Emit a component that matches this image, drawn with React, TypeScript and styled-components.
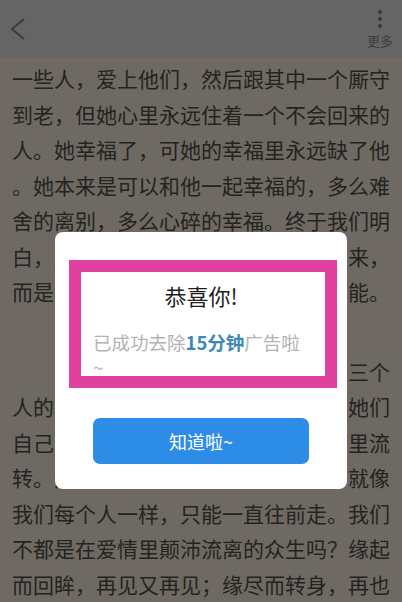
import styled, { createGlobalStyle } from "styled-components";

const GlobalStyle = createGlobalStyle`
  html, body {
    margin: 0;
    padding: 0;
    width: 402px;
    height: 602px;
    overflow: hidden;
    font-family: "Noto Sans CJK SC", "Noto Sans", sans-serif;
  }
`;

const Page = styled.div`
  position: relative;
  width: 402px;
  height: 602px;
  overflow: hidden;
  background: #ddd5c7;
`;

const Header = styled.div`
  height: 58px;
  background: #cbcbcb;
  display: flex;
  align-items: center;
  justify-content: space-between;
  padding: 0 9px 0 10px;
  box-sizing: border-box;
`;

const BackButton = styled.div`
  width: 20px;
  height: 58px;
  display: flex;
  align-items: center;
`;

const MoreButton = styled.div`
  display: flex;
  flex-direction: column;
  align-items: center;
  padding-top: 10px;
  height: 58px;
  box-sizing: border-box;
`;

const Dot = styled.span`
  width: 4px;
  height: 4px;
  border-radius: 50%;
  background: #757575;
  margin-bottom: 3px;
`;

const MoreLabel = styled.span`
  font-size: 13px;
  line-height: 16px;
  margin-top: 2px;
  color: #7a7a7a;
`;

const Article = styled.div`
  padding: 3px 12px 0;
  font-size: 21px;
  line-height: 35.5px;
  color: #4a4641;
`;

const Paragraph = styled.div`
  margin-bottom: 44px;
`;

const Line = styled.div`
  white-space: nowrap;
  height: 35.5px;
`;

const Overlay = styled.div`
  position: absolute;
  inset: 0;
  background: rgba(0, 0, 0, 0.5);
  display: flex;
  justify-content: center;
  align-items: flex-start;
  padding-top: 232px;
  box-sizing: border-box;
`;

const Dialog = styled.div`
  position: relative;
  width: 292px;
  background: #fff;
  border-radius: 8px;
  padding: 48px 38px 25px;
  box-sizing: border-box;
`;

const Title = styled.div`
  font-size: 22px;
  line-height: 30px;
  text-align: center;
  color: #1f1f1f;
`;

const Message = styled.div`
  margin-top: 20px;
  width: 212px;
  font-size: 18.5px;
  line-height: 25px;
  color: #b2b2b2;
`;

const Highlight = styled.span`
  color: #3d88b9;
  font-weight: 600;
`;

const ConfirmButton = styled.button`
  display: block;
  width: 100%;
  height: 46px;
  margin-top: 38px;
  border: none;
  border-radius: 7px;
  background: #2c8ce6;
  color: #fff;
  font-family: inherit;
  font-size: 18px;
`;

const HighlightFrame = styled.div`
  position: absolute;
  left: 14px;
  top: 28px;
  width: 268px;
  height: 128px;
  border: 12px solid #e0409e;
  box-sizing: border-box;
  pointer-events: none;
`;

const paragraphs = [
  [
    "一些人，爱上他们，然后跟其中一个厮守",
    "到老，但她心里永远住着一个不会回来的",
    "人。她幸福了，可她的幸福里永远缺了他",
    "。她本来是可以和他一起幸福的，多么难",
    "舍的离别，多么心碎的幸福。终于我们明",
    "白，爱情非生活的全部，它会走也会来，",
    "而是一场修行，让我们学会成长的可能。",
  ],
  [
    "　　时光如同一条长河，承载着我们三个",
    "人的青春与梦想，也同样承载着他们她们",
    "自己的悲欢离合，在无尽岁月的长河里流",
    "转。河水从来不会倒流，时光亦然，就像",
    "我们每个人一样，只能一直往前走。我们",
    "不都是在爱情里颠沛流离的众生吗？缘起",
    "而回眸，再见又再见；缘尽而转身，再也",
  ],
];

const App = () => {
  return (
    <>
      <GlobalStyle />
      <Page>
        <Header>
          <BackButton>
            <svg width="16" height="24" viewBox="0 0 16 24">
              <polyline
                points="14,2 2,12 14,22"
                fill="none"
                stroke="#757575"
                strokeWidth="2"
              />
            </svg>
          </BackButton>
          <MoreButton>
            <Dot />
            <Dot />
            <Dot />
            <MoreLabel>更多</MoreLabel>
          </MoreButton>
        </Header>
        <Article>
          {paragraphs.map((lines, p) => (
            <Paragraph key={p}>
              {lines.map((text, i) => (
                <Line key={i}>{text}</Line>
              ))}
            </Paragraph>
          ))}
        </Article>
        <Overlay>
          <Dialog>
            <Title>恭喜你!</Title>
            <Message>
              已成功去除<Highlight>15分钟</Highlight>广告啦~
            </Message>
            <ConfirmButton>知道啦~</ConfirmButton>
            <HighlightFrame />
          </Dialog>
        </Overlay>
      </Page>
    </>
  );
};

export default App;
